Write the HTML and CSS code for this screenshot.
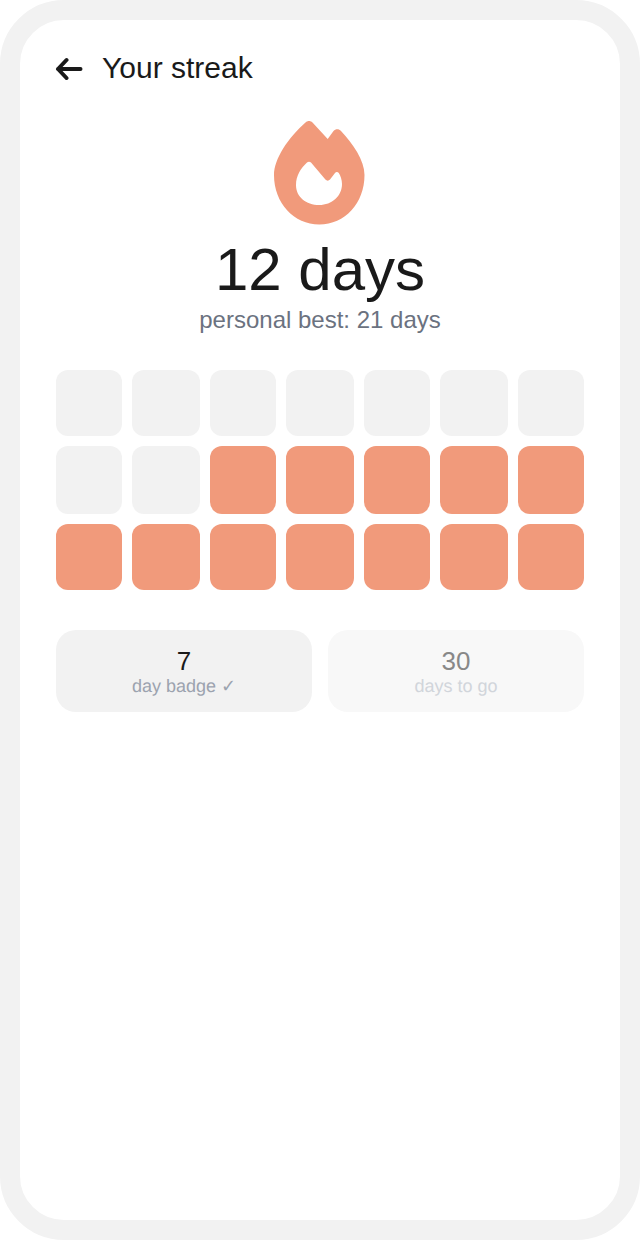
FILE: index.html
```html
<!DOCTYPE html>
<html lang="en">
    <head>
        <meta charset="UTF-8">
        <title>Your streak</title>
        <link rel="stylesheet" href="styles.css">
    </head>
    <body>
        <div class="phone">
            <div class="header">
                <svg class="back" width="28" height="24" viewBox="0 0 28 24">
                    <path d="M25.500 13H3M11.500 4L3 13l8.500 9" fill="none" stroke="#1a1a1a" stroke-width="4" stroke-linecap="round" stroke-linejoin="round"/>
                </svg>
                <span class="title">Your streak</span>
            </div>
            <div class="hero">
                <svg class="flame" width="100" height="110" viewBox="0 0 100 110">
                    <path fill-rule="evenodd" fill="#f19a7b" d="M35.500 4.500C37.500 2.500 40.500 2.500 42.500 4.500L57.700 21L63.500 13C65.500 10.500 69 10.500 71 13C83 26 94.500 42 94.500 57C94.500 85 75 106.500 49.300 106.500C24 106.500 4 85 4 57C4 41 18 20 35.500 4.500ZM41 44.600C39.800 43.400 38.200 43.400 37 44.600C31 50 26 58 26 67C26 79 36 87 49.300 87C62 87 72 78 72 66C72 62 70.500 57.500 68.800 55C67.800 53.800 66 53.800 65 55L60 61.500C58.700 63 56.700 63 55.400 61.500Z"/>
                </svg>
                <div class="count">12 days</div>
                <div class="best">personal best: 21 days</div>
            </div>
            <div class="days">
                <div class="day"></div>
                <div class="day"></div>
                <div class="day"></div>
                <div class="day"></div>
                <div class="day"></div>
                <div class="day"></div>
                <div class="day"></div>
                <div class="day"></div>
                <div class="day"></div>
                <div class="day on"></div>
                <div class="day on"></div>
                <div class="day on"></div>
                <div class="day on"></div>
                <div class="day on"></div>
                <div class="day on"></div>
                <div class="day on"></div>
                <div class="day on"></div>
                <div class="day on"></div>
                <div class="day on"></div>
                <div class="day on"></div>
                <div class="day on"></div>
            </div>
            <div class="badges">
                <div class="badge">
                    <div class="badge-num">7</div>
                    <div class="badge-label">day badge ✓</div>
                </div>
                <div class="badge locked">
                    <div class="badge-num">30</div>
                    <div class="badge-label">days to go</div>
                </div>
            </div>
        </div>
    </body>
</html>
```

FILE: styles.css
```css
body {
    margin: 0;
    background: #fff;
    font-family: "Liberation Sans", Arial, sans-serif;
    color: #1a1a1a;
}
.phone {
    box-sizing: border-box;
    width: 640px;
    height: 1240px;
    padding: 28px 36px;
    background: #fff;
    border: 20px solid #f2f2f2;
    border-radius: 64px;
}
.header {
    display: flex;
    align-items: center;
    gap: 20px;
    height: 40px;
}
.back {
    flex: none;
    margin-left: -1px;
    margin-right: -1px;
}
.title {
    font-size: 30px;
}
.hero {
    display: flex;
    flex-direction: column;
    align-items: center;
    margin-top: 30px;
}
.flame {
    display: block;
}
.count {
    margin-top: 7px;
    font-size: 60px;
    line-height: 70px;
}
.best {
    font-size: 24px;
    line-height: 30px;
    color: #6b7280;
}
.days {
    display: grid;
    grid-template-columns: 66px 68px 66px 68px 66px 68px 66px;
    grid-template-rows: 66px 68px 66px;
    gap: 10px;
    margin-top: 35px;
}
.day {
    background: #f2f2f2;
    border-radius: 12px;
}
.day.on {
    background: #f19a7b;
}
.badges {
    display: flex;
    gap: 16px;
    margin-top: 40px;
}
.badge {
    flex: 1;
    height: 82px;
    box-sizing: border-box;
    padding-top: 17px;
    background: #f2f2f2;
    border-radius: 20px;
    text-align: center;
}
.badge-num {
    font-size: 26px;
    line-height: 28px;
}
.badge-label {
    font-size: 18px;
    line-height: 22px;
    color: #9ca3af;
    text-rendering: geometricPrecision;
}
.badge.locked {
    background: #f8f8f8;
}
.badge.locked .badge-num {
    color: #888888;
}
.badge.locked .badge-label {
    color: #d1d5db;
}
```
